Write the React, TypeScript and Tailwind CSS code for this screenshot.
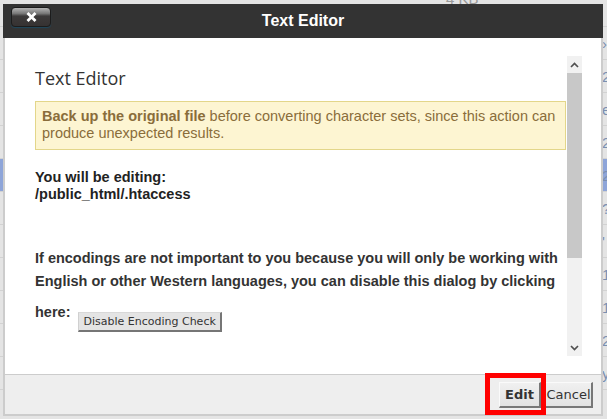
import React from "react";

const rows = [
  { t: "4 KB", r: "" },
  { t: "", r: "›" },
  { t: "", r: "2" },
  { t: "", r: "e" },
  { t: "", r: "2" },
  { t: "", r: "2" },
  { t: "", r: "?" },
  { t: "", r: "'" },
  { t: "", r: "1" },
  { t: "", r: "1" },
  { t: "", r: "2" },
  { t: "", r: "y" },
  { t: "", r: "" },
];

function Chevron({ up }: { up?: boolean }) {
  return (
    <svg width="9" height="6" viewBox="0 0 9 6" className="block">
      <path
        d={up ? "M1 5 L4.5 1.5 L8 5" : "M1 1 L4.5 4.5 L8 1"}
        fill="none"
        stroke="#505050"
        strokeWidth="1.7"
      />
    </svg>
  );
}

export default function App() {
  return (
    <div className="relative w-[607px] h-[419px] overflow-hidden bg-[#e4e4e4] font-['Liberation_Sans',Arial,sans-serif]">
      {/* page behind the dialog */}
      <div className="flex flex-col">
        {rows.map((row, i) => (
          <div
            key={i}
            className={
              (i === 0 ? "h-[27px] " : "h-[33px] ") +
              (i === 5 ? "bg-[#8ea5d9] " : "") +
              "relative border-b border-[#d2d2d2] flex"
            }
          >
            {row.t && (
              <span className="absolute left-[446px] top-[-12px] text-[15px] text-[#9a9a9a]">{row.t}</span>
            )}
            {row.r && (
              <span className="absolute left-[602px] top-[6px] text-[15px] text-[#7b8fb0]">{row.r}</span>
            )}
          </div>
        ))}
      </div>

      {/* dialog */}
      <div className="absolute left-[3px] top-[4px] w-[600px] flex flex-col">
        <div className="relative h-[34px] bg-[#333333] flex items-center justify-center">
          <div className="absolute left-[8px] top-[3px] w-[40px] h-[20px] rounded-[4px] border border-[#1c1c1c] bg-[linear-gradient(#b4b4b4_0%,#7a7a7a_30%,#3c3a3a_45%,#363232_100%)] shadow-[0_1px_1px_#20465a] flex items-center justify-center">
            <svg width="11" height="10" viewBox="0 0 11 10">
              <path d="M1.5 1 L9.5 9 M9.5 1 L1.5 9" stroke="#ffffff" strokeWidth="2.8" />
            </svg>
          </div>
          <span className="text-white font-bold text-[16px] leading-none">Text Editor</span>
        </div>

        <div className="border-x-2 border-b-2 border-[#cccccc] bg-white">
          <div className="h-[336px] pt-[18px] pl-[15px] pr-[19px]">
            <div className="h-[300px] flex">
              <div className="flex-1 pl-[15px] pr-[1px] pt-[12px] text-[#333333]">
                <h1 className="font-['Open_Sans',sans-serif] text-[18px] leading-[21px] font-normal">Text Editor</h1>
                <div className="mt-[12px] border border-[#e3d68a] bg-[#fdf5d2] px-[6px] pt-[6px] pb-[7px] text-[14.5px] leading-[17px] text-[#8a6d3b]">
                  <b>Back up the original file</b> before converting character sets, since this action can produce unexpected results.
                </div>
                <div className="mt-[19px] text-[14.5px] leading-[17px] font-bold text-[#222222]">
                  <div>You will be editing:</div>
                  <div>/public_html/.htaccess</div>
                </div>
                <p className="mt-[44px] text-[14.5px] leading-[23px] font-bold text-[#333333]">
                  If encodings are not important to you because you will only be working with English or other Western languages, you can disable this dialog by clicking here:
                  <span className="inline-block align-[-8px] mt-[19px] ml-[8px] h-[20px] px-[4px] pt-[1px] bg-[#e4e4e4] border-t border-l border-r-2 border-b-2 border-t-[#d8d8d8] border-l-[#d0d0d0] border-r-[#767676] border-b-[#767676] font-['DejaVu_Sans',sans-serif] font-normal text-[11px] leading-[15px] text-[#333333]">
                    Disable Encoding Check
                  </span>
                </p>
              </div>
              <div className="w-[15px] bg-[#f1f1f1] flex flex-col">
                <div className="h-[17px] flex items-center justify-center">
                  <Chevron up />
                </div>
                <div className="h-[185px] bg-[#c8c8c8]"></div>
                <div className="flex-1"></div>
                <div className="h-[17px] flex items-center justify-center">
                  <Chevron />
                </div>
              </div>
            </div>
          </div>
          <div className="h-[40px] border-t border-[#cccccc] bg-[#eeeeee] flex justify-end items-start pt-[7px] pr-[8px] gap-[4px] font-['DejaVu_Sans',sans-serif] text-[13px] text-[#333333]">
            <div className="w-[42px] h-[26px] flex items-center justify-center font-bold bg-[linear-gradient(#f0f0f0,#e2e2e2)] border-t border-l border-r-2 border-b-2 border-t-[#fafafa] border-l-[#fafafa] border-r-[#777777] border-b-[#777777]">
              Edit
            </div>
            <div className="w-[48px] h-[26px] flex items-center justify-center bg-[linear-gradient(#f0f0f0,#e2e2e2)] border-t border-l border-r-2 border-b-2 border-t-[#fafafa] border-l-[#fafafa] border-r-[#777777] border-b-[#777777]">
              Cancel
            </div>
          </div>
        </div>

        <div className="absolute left-[482px] top-[369px] w-[61px] h-[42px] border-[5px] border-[#ff0000]"></div>
      </div>
    </div>
  );
}
